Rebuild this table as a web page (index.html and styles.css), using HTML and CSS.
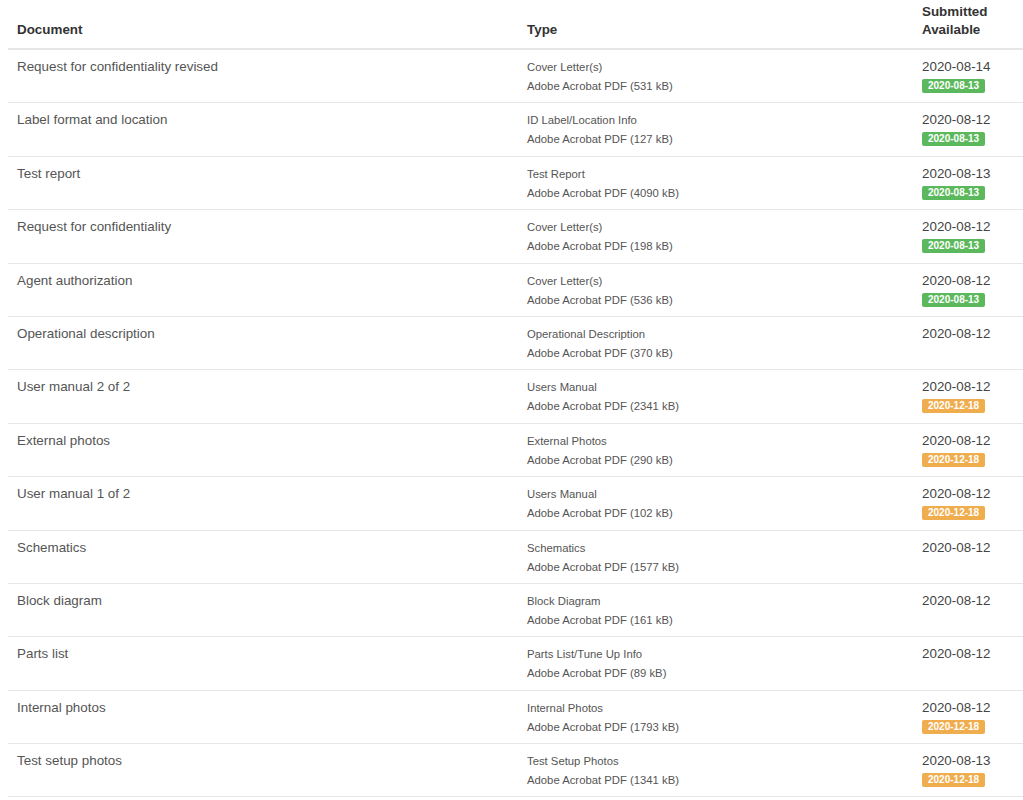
FILE: index.html
```html
<!DOCTYPE html>
<html>
<head>
<meta charset="utf-8">
<link rel="stylesheet" href="styles.css">
</head>
<body>
<div class="wrap">
<table class="docs">
<colgroup><col class="c-doc"><col class="c-type"><col class="c-date"></colgroup>
<thead>
<tr><th>Document</th><th>Type</th><th>Submitted<br>Available</th></tr>
</thead>
<tbody>
<tr><td class="name">Request for confidentiality revised</td><td class="type"><div>Cover Letter(s)</div><div>Adobe Acrobat PDF (531 kB)</div></td><td class="date"><div>2020-08-14</div><span class="badge green">2020-08-13</span></td></tr>
<tr><td class="name">Label format and location</td><td class="type"><div>ID Label/Location Info</div><div>Adobe Acrobat PDF (127 kB)</div></td><td class="date"><div>2020-08-12</div><span class="badge green">2020-08-13</span></td></tr>
<tr><td class="name">Test report</td><td class="type"><div>Test Report</div><div>Adobe Acrobat PDF (4090 kB)</div></td><td class="date"><div>2020-08-13</div><span class="badge green">2020-08-13</span></td></tr>
<tr><td class="name">Request for confidentiality</td><td class="type"><div>Cover Letter(s)</div><div>Adobe Acrobat PDF (198 kB)</div></td><td class="date"><div>2020-08-12</div><span class="badge green">2020-08-13</span></td></tr>
<tr><td class="name">Agent authorization</td><td class="type"><div>Cover Letter(s)</div><div>Adobe Acrobat PDF (536 kB)</div></td><td class="date"><div>2020-08-12</div><span class="badge green">2020-08-13</span></td></tr>
<tr><td class="name">Operational description</td><td class="type"><div>Operational Description</div><div>Adobe Acrobat PDF (370 kB)</div></td><td class="date"><div>2020-08-12</div></td></tr>
<tr><td class="name">User manual 2 of 2</td><td class="type"><div>Users Manual</div><div>Adobe Acrobat PDF (2341 kB)</div></td><td class="date"><div>2020-08-12</div><span class="badge orange">2020-12-18</span></td></tr>
<tr><td class="name">External photos</td><td class="type"><div>External Photos</div><div>Adobe Acrobat PDF (290 kB)</div></td><td class="date"><div>2020-08-12</div><span class="badge orange">2020-12-18</span></td></tr>
<tr><td class="name">User manual 1 of 2</td><td class="type"><div>Users Manual</div><div>Adobe Acrobat PDF (102 kB)</div></td><td class="date"><div>2020-08-12</div><span class="badge orange">2020-12-18</span></td></tr>
<tr><td class="name">Schematics</td><td class="type"><div>Schematics</div><div>Adobe Acrobat PDF (1577 kB)</div></td><td class="date"><div>2020-08-12</div></td></tr>
<tr><td class="name">Block diagram</td><td class="type"><div>Block Diagram</div><div>Adobe Acrobat PDF (161 kB)</div></td><td class="date"><div>2020-08-12</div></td></tr>
<tr><td class="name">Parts list</td><td class="type"><div>Parts List/Tune Up Info</div><div>Adobe Acrobat PDF (89 kB)</div></td><td class="date"><div>2020-08-12</div></td></tr>
<tr><td class="name">Internal photos</td><td class="type"><div>Internal Photos</div><div>Adobe Acrobat PDF (1793 kB)</div></td><td class="date"><div>2020-08-12</div><span class="badge orange">2020-12-18</span></td></tr>
<tr><td class="name">Test setup photos</td><td class="type"><div>Test Setup Photos</div><div>Adobe Acrobat PDF (1341 kB)</div></td><td class="date"><div>2020-08-13</div><span class="badge orange">2020-12-18</span></td></tr>
</tbody>
</table>
</div>
</body>
</html>
```

FILE: styles.css
```css
html, body {
  margin: 0;
  padding: 0;
  background: #fff;
}
body {
  font-family: "Liberation Sans", Arial, Helvetica, sans-serif;
  font-size: 13.4px;
  color: #333;
}
.wrap {
  padding-left: 8px;
}
.docs {
  width: 1015px;
  border-collapse: collapse;
  table-layout: fixed;
}
.c-doc { width: 510px; }
.c-type { width: 395px; }
.c-date { width: 110px; }
.docs th {
  text-align: left;
  vertical-align: bottom;
  font-weight: bold;
  color: #333;
  line-height: 18px;
  padding: 3px 8px 9px 9px;
  border-bottom: 2px solid #e6e6e6;
}
.docs td {
  vertical-align: top;
  padding: 8px 8px 6.4px 9px;
  border-bottom: 1px solid #e6e6e6;
}
.name {
  color: #555;
  line-height: 18px;
}
.type {
  font-size: 11.3px;
  line-height: 19px;
  color: #555;
}
.date {
  color: #444;
  line-height: 18px;
}
.badge {
  display: inline-block;
  font-size: 10px;
  font-weight: bold;
  line-height: 11px;
  color: #fff;
  padding: 1px 6px 2px;
  border-radius: 2px;
  margin-top: 3px;
  vertical-align: top;
}
.green { background: #5cb85c; }
.orange { background: #f0ad4e; }
```
